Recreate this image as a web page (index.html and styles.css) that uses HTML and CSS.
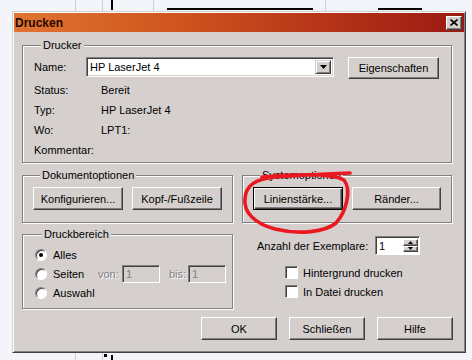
FILE: index.html
```html
<!DOCTYPE html>
<html>
<head>
<meta charset="utf-8">
<link rel="stylesheet" href="styles.css">
</head>
<body>
<div class="desk">
  <span class="dl v75"></span>
  <span class="dl v102"></span>
  <span class="dl v153"></span>
  <span class="dl v325"></span>
  <span class="dk k111"></span>
  <span class="dk bar1"></span>
  <span class="dk bar2"></span>
  <span class="dk m104"></span>
  <span class="dk k111b"></span>
</div>

<div class="window">
  <div class="titlebar">
    <span class="title">Drucken</span>
    <span class="close"><svg width="8" height="7" viewBox="0 0 8 7"><path d="M0.5 0.5 L7.5 6.5 M7.5 0.5 L0.5 6.5" stroke="#000" stroke-width="1.6" fill="none"/></svg></span>
  </div>

  <div class="content">
    <div class="group printer">
      <div class="legend">Drucker</div>
      <div class="name-row">
        <span class="lbl-name">Name:</span>
        <div class="combo">
          <span class="combo-text">HP LaserJet 4</span>
          <span class="combo-btn"><svg width="7" height="4" viewBox="0 0 7 4"><path d="M0 0 H7 L3.5 4 Z" fill="#000"/></svg></span>
        </div>
        <div class="btn btn-props">Eigenschaften</div>
      </div>
      <div class="info-row first"><span class="lbl">Status:</span><span>Bereit</span></div>
      <div class="info-row"><span class="lbl">Typ:</span><span>HP LaserJet 4</span></div>
      <div class="info-row"><span class="lbl">Wo:</span><span>LPT1:</span></div>
      <div class="info-row"><span class="lbl">Kommentar:</span><span></span></div>
    </div>

    <div class="row2">
      <div class="group opts">
        <div class="legend">Dokumentoptionen</div>
        <div class="btns">
          <div class="btn w90">Konfigurieren...</div>
          <div class="btn w90">Kopf-/Fußzeile</div>
        </div>
      </div>
      <div class="group opts sys">
        <div class="legend">Systemoptionen</div>
        <div class="btns">
          <div class="btn w90 default">Linienstärke...</div>
          <div class="btn w89">Ränder...</div>
        </div>
      </div>
    </div>

    <div class="row3">
      <div class="group range">
        <div class="legend">Druckbereich</div>
        <div class="radios">
          <div class="radio-row"><span class="radio on"></span><span class="radio-label">Alles</span></div>
          <div class="radio-row"><span class="radio"></span><span class="radio-label">Seiten</span>
            <span class="dis-lbl von">von:</span><span class="dis-input">1</span>
            <span class="dis-lbl bis">bis:</span><span class="dis-input">1</span>
          </div>
          <div class="radio-row"><span class="radio"></span><span class="radio-label">Auswahl</span></div>
        </div>
      </div>
      <div class="copies">
        <div class="copies-row">
          <span class="copies-lbl">Anzahl der Exemplare:</span>
          <div class="spin">
            <span class="spin-text">1</span>
            <span class="spin-btns">
              <span class="spin-btn up"><svg width="5" height="3" viewBox="0 0 5 3"><path d="M0 3 H5 L2.5 0 Z" fill="#000"/></svg></span>
              <span class="spin-btn down"><svg width="5" height="3" viewBox="0 0 5 3"><path d="M0 0 H5 L2.5 3 Z" fill="#000"/></svg></span>
            </span>
          </div>
        </div>
        <div class="checks">
          <div class="check-row"><span class="check"></span><span>Hintergrund drucken</span></div>
          <div class="check-row"><span class="check"></span><span>In Datei drucken</span></div>
        </div>
      </div>
    </div>

    <div class="actions">
      <div class="btn w76">OK</div>
      <div class="btn w76">Schließen</div>
      <div class="btn w76">Hilfe</div>
    </div>
  </div>
</div>

<svg class="scribble" width="472" height="360" viewBox="0 0 472 360">
  <path d="M262 177 C285 175 330 172 344 180 C352 190 346 212 336 223 C325 232 300 235 275 229 C256 224 243 213 245 198 C246 185 256 179 275 177 C300 175 325 174 350 173" stroke="#ea1820" stroke-width="3.6" fill="none" stroke-linecap="round" stroke-linejoin="round"/>
</svg>
</body>
</html>
```

FILE: styles.css
```css
* { box-sizing: border-box; }
html, body { margin: 0; }
body {
  width: 472px;
  height: 360px;
  overflow: hidden;
  position: relative;
  padding: 11px 0 0 12px;
  background: #f3f5fa;
  font: 11px "Liberation Sans", Arial, sans-serif;
  color: #000;
}

/* desktop behind the dialog */
.desk .dl, .desk .dk { position: absolute; display: block; }
.dl { width: 1px; background: #ccd0d8; top: 0; }
.v75 { left: 75px; height: 360px; }
.v102 { left: 102px; height: 360px; }
.v153 { left: 153px; height: 12px; }
.v325 { left: 325px; height: 12px; }
.dk { background: #000; }
.k111 { left: 111px; top: 0; width: 2px; height: 10px; }
.bar1 { left: 167px; top: 8px; width: 146px; height: 2px; }
.bar2 { left: 378px; top: 8px; width: 44px; height: 2px; }
.m104 { left: 104px; top: 354px; width: 3px; height: 3px; }
.k111b { left: 111px; top: 355px; width: 2px; height: 5px; }

.window {
  position: relative;
  z-index: 1;
  width: 454px;
  height: 342px;
  padding: 1px;
  background: #d5d0ce;
  border: 1px solid;
  border-color: #d5d0ce #404040 #404040 #d5d0ce;
  box-shadow: inset 1px 1px #fff, inset -1px -1px #808080;
  display: flex;
  flex-direction: column;
}

.titlebar {
  height: 19px;
  flex: none;
  background: linear-gradient(90deg, #e07432 0%, #d0561f 35%, #b53318 70%, #9a1a12 100%);
  display: flex;
  align-items: center;
  justify-content: space-between;
  padding: 0 2px 0 1px;
}
.title { font-weight: bold; font-size: 12px; color: #2a0800; }
.close {
  width: 16px;
  height: 14px;
  background: #d5d0ce;
  border: 1px solid;
  border-color: #fff #404040 #404040 #fff;
  box-shadow: inset -1px -1px #808080;
  display: flex;
  align-items: center;
  justify-content: center;
}

.content {
  padding: 13px 0 0 8px;
  display: flex;
  flex-direction: column;
}

.group {
  border: 1px solid #808080;
  box-shadow: inset 1px 1px #fff, 1px 1px #fff;
}
.legend {
  width: fit-content;
  height: 13px;
  line-height: 13px;
  margin: -7px 0 0 7px;
  padding: 0 2px;
  background: #d5d0ce;
}

.btn {
  height: 23px;
  display: flex;
  align-items: center;
  justify-content: center;
  background: #d5d0ce;
  border: 1px solid;
  border-color: #fff #404040 #404040 #fff;
  box-shadow: inset -1px -1px #808080;
  white-space: nowrap;
}
.btn.default {
  border-color: #000;
  box-shadow: inset 1px 1px #fff, inset -1px -1px #404040, inset -2px -2px #808080;
}
.w90 { width: 90px; }
.w89 { width: 89px; }
.w76 { width: 76px; }

/* printer group */
.printer { width: 430px; height: 118px; padding: 0 12px 0 11px; }
.name-row { display: flex; align-items: flex-start; margin-top: 5px; }
.lbl-name { width: 52px; line-height: 20px; }
.combo {
  width: 248px;
  height: 20px;
  display: flex;
  padding: 2px;
  background: #fff;
  border: 1px solid;
  border-color: #808080 #fff #fff #808080;
  box-shadow: inset 1px 1px #404040, inset -1px -1px #d5d0ce;
}
.combo-text { flex: 1; line-height: 14px; padding-left: 1px; }
.combo-btn {
  width: 16px;
  height: 14px;
  display: flex;
  align-items: center;
  justify-content: center;
  background: #d5d0ce;
  border: 1px solid;
  border-color: #d5d0ce #404040 #404040 #d5d0ce;
  box-shadow: inset 1px 1px #fff, inset -1px -1px #808080;
}
.btn-props { margin-left: 14px; width: 91px; height: 22px; }
.info-row { display: flex; line-height: 20px; height: 20px; }
.info-row.first { margin-top: 1px; }
.info-row .lbl { width: 67px; }

/* option groups */
.row2 { display: flex; gap: 9px; margin-top: 12px; }
.opts { width: 211px; height: 48px; padding: 0 10px; }
.opts.sys { width: 210px; }
.btns { display: flex; gap: 9px; margin-top: 5px; }

/* print range */
.row3 { display: flex; gap: 9px; margin-top: 11px; }
.range { width: 211px; height: 75px; padding: 0 0 0 12px; }
.radios { margin-top: 4px; }
.radio-row { display: flex; align-items: center; height: 19px; }
.radio {
  width: 12px;
  height: 12px;
  margin-right: 6px;
  border-radius: 50%;
  background: #fff;
  border: 1px solid;
  border-color: #808080 #fff #fff #808080;
  box-shadow: inset 1px 1px #404040;
  display: flex;
  align-items: center;
  justify-content: center;
}
.radio.on::after {
  content: "";
  width: 4px;
  height: 4px;
  border-radius: 50%;
  background: #000;
}
.radio-label { width: 45px; }
.dis-lbl { color: #808080; text-shadow: 1px 1px #fff; }
.dis-lbl.von { width: 24px; }
.dis-lbl.bis { width: 19px; margin-left: 9px; }
.dis-input {
  width: 38px;
  height: 18px;
  line-height: 14px;
  padding: 1px 0 0 3px;
  color: #808080;
  background: #d5d0ce;
  border: 1px solid;
  border-color: #808080 #fff #fff #808080;
  box-shadow: inset 1px 1px #404040;
}

/* copies */
.copies { width: 210px; padding: 2px 0 0 15px; display: flex; flex-direction: column; }
.copies-row { display: flex; align-items: center; height: 19px; }
.copies-lbl { width: 118px; }
.spin {
  width: 45px;
  height: 19px;
  display: flex;
  padding: 2px 1px 2px 2px;
  background: #fff;
  border: 1px solid;
  border-color: #808080 #fff #fff #808080;
  box-shadow: inset 1px 1px #404040;
}
.spin-text { flex: 1; line-height: 14px; padding-left: 1px; }
.spin-btns { width: 15px; display: flex; flex-direction: column; }
.spin-btn {
  flex: 1;
  display: flex;
  align-items: center;
  justify-content: center;
  background: #d5d0ce;
  border: 1px solid;
  border-color: #fff #404040 #404040 #fff;
  box-shadow: inset -1px -1px #808080;
}
.checks { margin: 8px 0 0 28px; }
.check-row { display: flex; align-items: center; height: 19px; }
.check {
  width: 13px;
  height: 13px;
  margin-right: 5px;
  background: #fff;
  border: 1px solid;
  border-color: #808080 #fff #fff #808080;
  box-shadow: inset 1px 1px #404040;
}

/* bottom buttons */
.actions {
  display: flex;
  justify-content: flex-end;
  gap: 12px;
  margin-top: 8px;
  padding-right: 11px;
}

.scribble {
  position: absolute;
  left: 0;
  top: 0;
  z-index: 2;
  pointer-events: none;
}
```
